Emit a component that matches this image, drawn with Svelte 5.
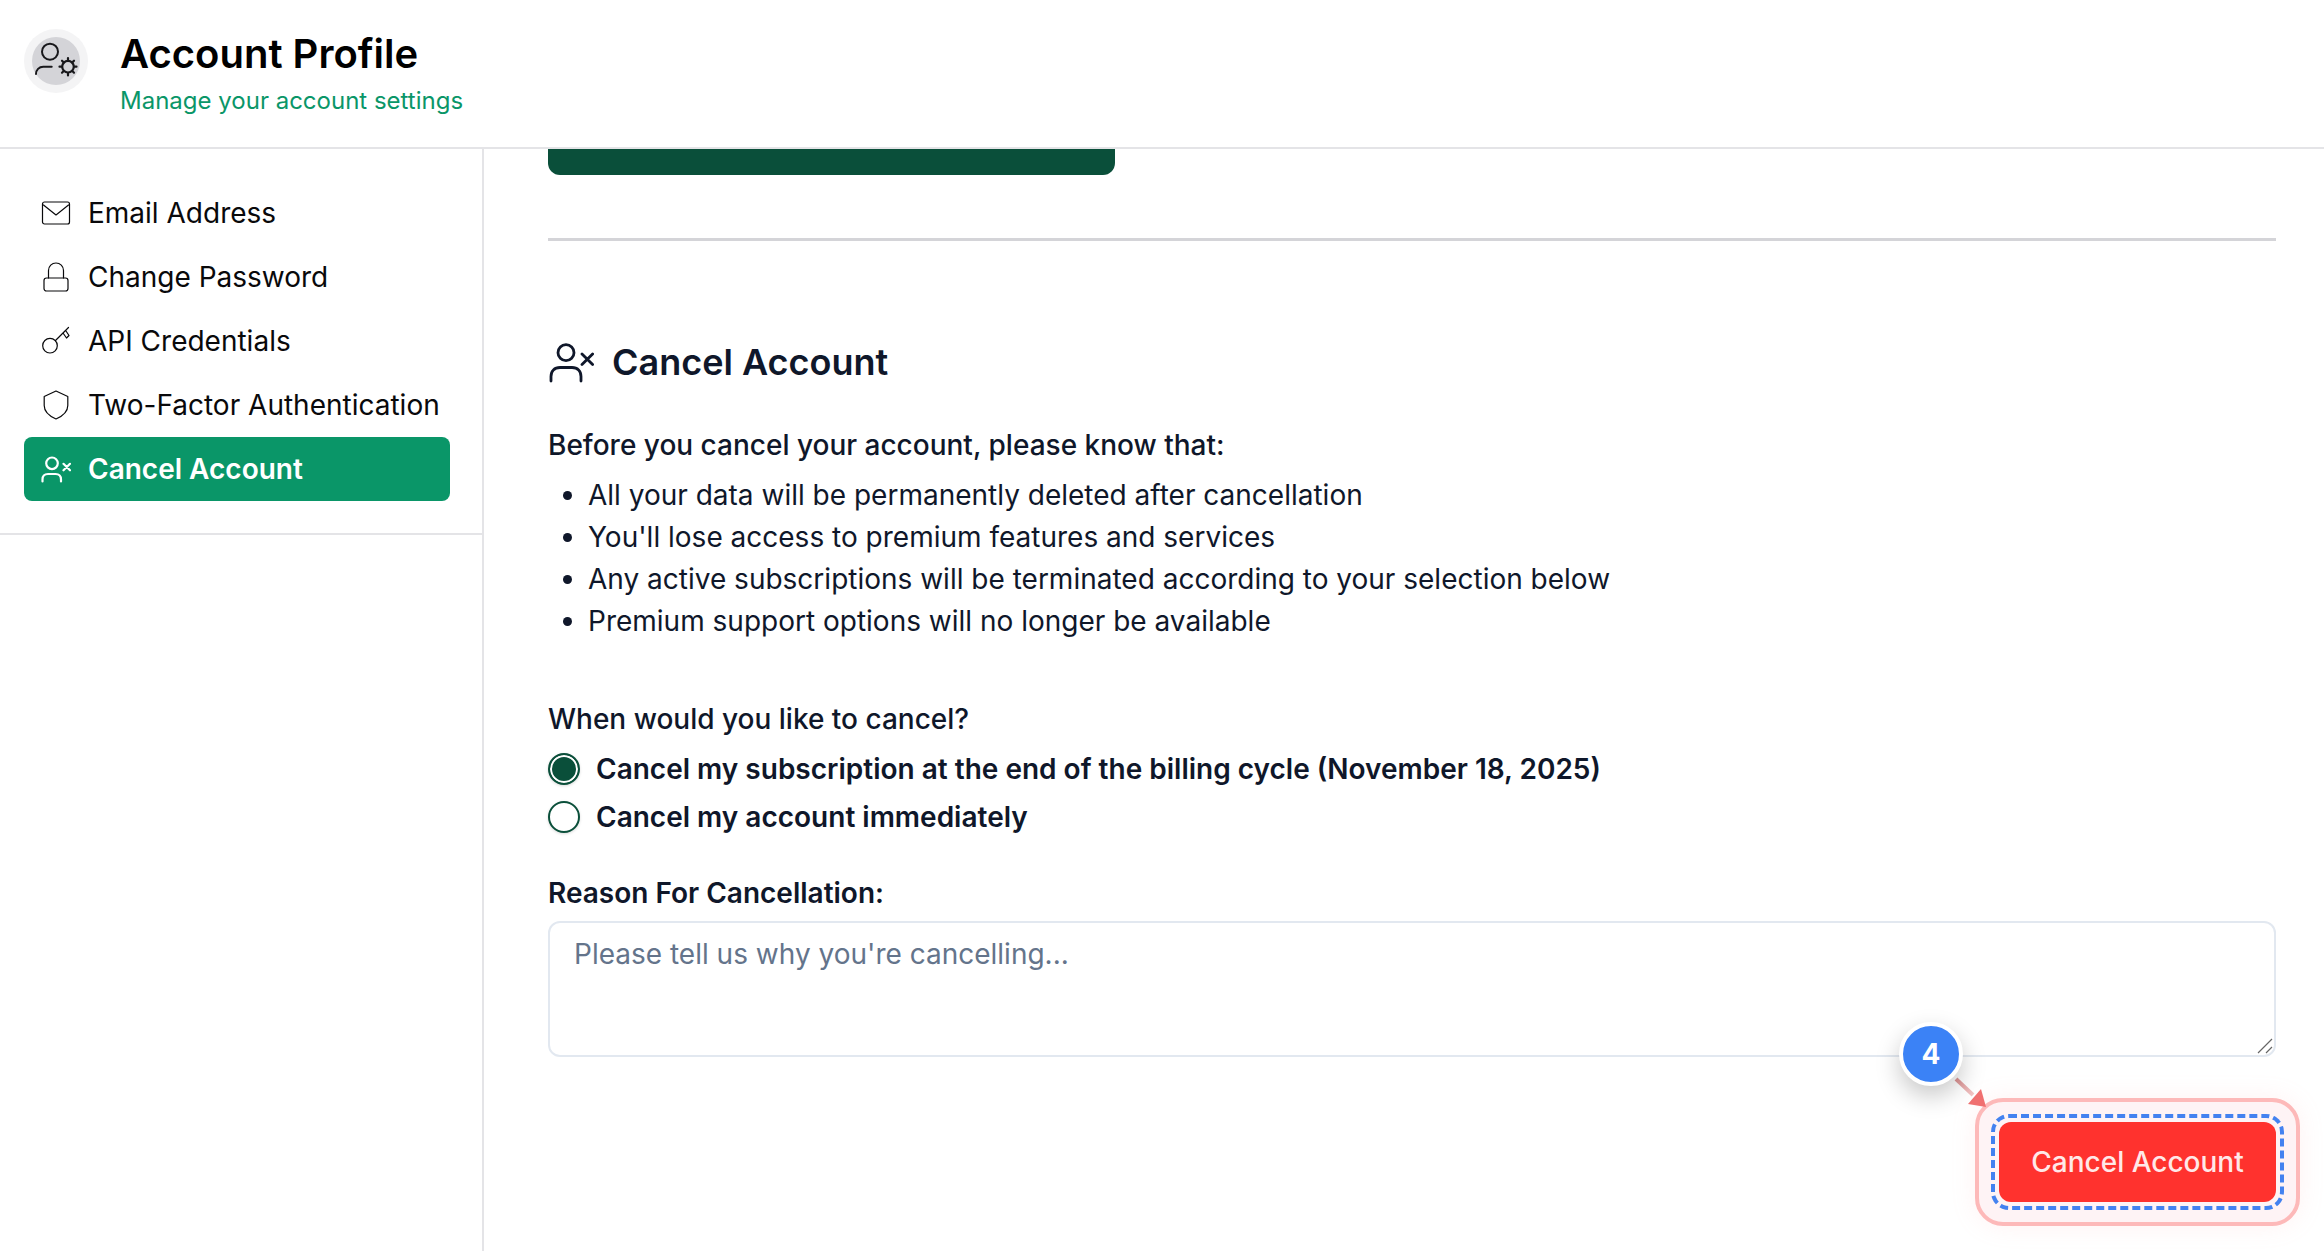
<script lang="ts">
	const navItems = [
		{ id: 'email', label: 'Email Address' },
		{ id: 'password', label: 'Change Password' },
		{ id: 'api', label: 'API Credentials' },
		{ id: 'twofa', label: 'Two-Factor Authentication' },
		{ id: 'cancel', label: 'Cancel Account' }
	];

	const notices = [
		'All your data will be permanently deleted after cancellation',
		"You'll lose access to premium features and services",
		'Any active subscriptions will be terminated according to your selection below',
		'Premium support options will no longer be available'
	];

	let when = $state('end');
</script>

<div class="page">
	<header class="topbar">
		<div class="avatar">
			<span class="avatar-inner">
				<svg width="48" height="48" viewBox="0 0 48 48" fill="none" stroke="#18181b" stroke-width="2" stroke-linecap="round">
					<circle cx="18" cy="14.700" r="8" />
					<path d="M4 37c0-4 3-7.300 7.300-7.300h8.400" />
					<circle cx="36" cy="29.700" r="5.800" stroke-width="2.200" />
					<path d="M36 21v2.500M36 36v2.500M27.500 29.700H30M42 29.700h2.500M30 23.700l1.700 1.700M40.300 34l1.700 1.700M30 35.700l1.700-1.700M40.300 25.400l1.700-1.700" stroke-width="2.200" />
				</svg>
			</span>
		</div>
		<div class="titles">
			<h1>Account Profile</h1>
			<p>Manage your account settings</p>
		</div>
	</header>

	<div class="body">
		<aside class="sidebar">
			<nav>
				{#each navItems as item}
					<a href="#{item.id}" class="nav-item" class:active={item.id === 'cancel'}>
						<svg width="30" height="30" viewBox="0 0 30 30" fill="none" stroke="currentColor" stroke-width="1.200" stroke-linecap="round" stroke-linejoin="round">
							{#if item.id === 'email'}
								<rect x="1.500" y="4" width="27" height="22" rx="2" />
								<path d="M2.500 7 15 17 27.500 7" />
							{:else if item.id === 'password'}
								<rect x="3" y="16" width="24" height="13" rx="2.500" />
								<path d="M7.500 16V8.500a7.500 7.500 0 0 1 15 0V16" />
							{:else if item.id === 'api'}
								<circle cx="9" cy="19.700" r="7.300" />
								<path d="M14.500 14.500 27.500 1.500M22 7l3.500 5 2.500-2.500-3-4.500" />
							{:else if item.id === 'twofa'}
								<path d="M15 1 26.800 6.500v9c0 6.500-5 10.500-11.800 13.500-6.800-3-11.800-7-11.800-13.500v-9z" />
							{:else}
								<g stroke-width="2.200">
									<circle cx="11" cy="9.300" r="5.800" />
									<path d="M1.500 27.500v-2c0-3.500 2-5.500 5.500-5.500h7.500c3.500 0 5.500 2 5.500 5.500v2" />
									<path d="m22.500 9.800 6.500 6.500m0-6.500-6.500 6.500" />
								</g>
							{/if}
						</svg>
						<span>{item.label}</span>
					</a>
				{/each}
			</nav>
		</aside>

		<main class="content">
			<div class="save-stub"></div>
			<hr />

			<h2>
				<svg width="46" height="46" viewBox="0 0 46 46" fill="none" stroke="#0f172a" stroke-width="2.800" stroke-linecap="round" stroke-linejoin="round">
					<circle cx="18" cy="13.700" r="8" />
					<path d="M3 42v-4.500c0-5.500 3.500-9 9-9h12c5.500 0 9 3.500 9 9V42" />
					<path d="m34 15 10.600 10.600m0-10.600L34 25.600" />
				</svg>
				Cancel Account
			</h2>

			<p class="lead">Before you cancel your account, please know that:</p>
			<ul>
				{#each notices as notice}
					<li>{notice}</li>
				{/each}
			</ul>

			<p class="question">When would you like to cancel?</p>
			<label class="option">
				<input type="radio" name="when" value="end" bind:group={when} />
				Cancel my subscription at the end of the billing cycle (November 18, 2025)
			</label>
			<label class="option">
				<input type="radio" name="when" value="now" bind:group={when} />
				Cancel my account immediately
			</label>

			<label class="reason" for="reason">Reason For Cancellation:</label>
			<div class="field">
				<textarea id="reason" placeholder="Please tell us why you're cancelling..."></textarea>
				<svg class="grip" width="16" height="16" viewBox="0 0 16 16" fill="none" stroke="#666" stroke-width="1.200">
					<path d="M1 15 15 1M9 15l6-6" />
				</svg>
			</div>

			<div class="actions">
				<div class="cta">
					<span class="highlight"></span>
					<span class="dashes"></span>
					<button type="button">Cancel Account</button>
					<svg class="arrow" width="60" height="60" viewBox="0 0 60 60" fill="none">
						<defs>
							<linearGradient id="shaft" x1="0" y1="0" x2="1" y2="1">
								<stop offset="0" stop-color="#dc9393" />
								<stop offset="1" stop-color="#f3c6c6" />
							</linearGradient>
						</defs>
						<path d="M4 4 21 20" stroke="url(#shaft)" stroke-width="4" />
						<path d="M16 29 29 14 34 32z" fill="#f07070" />
					</svg>
					<span class="badge">4</span>
				</div>
			</div>
		</main>
	</div>
</div>

<style>
	:global(body) {
		margin: 0;
		background: #fff;
		font-family: Inter, "Liberation Sans", sans-serif;
	}

	.page {
		height: 1251px;
		display: flex;
		flex-direction: column;
		overflow: hidden;
	}

	/* Top bar */
	.topbar {
		display: flex;
		gap: 32px;
		height: 118px;
		padding: 29px 24px 0;
		border-bottom: 2px solid #e4e4e7;
		flex: none;
	}

	.avatar {
		width: 64px;
		height: 64px;
		border-radius: 50%;
		background: #f4f4f5;
		display: flex;
		align-items: center;
		justify-content: center;
	}

	.avatar-inner {
		display: flex;
		width: 48px;
		height: 48px;
		border-radius: 50%;
		background: #d4d4d8;
	}

	.titles h1 {
		margin: 0;
		font-size: 40px;
		line-height: 50px;
		font-weight: 600;
		color: #000;
	}

	.titles p {
		margin: 7px 0 0;
		font-size: 24px;
		line-height: 30px;
		color: #0a9668;
	}

	.body {
		flex: 1;
		display: flex;
		min-height: 0;
	}

	/* Sidebar */
	.sidebar {
		width: 482px;
		flex: none;
		border-right: 2px solid #e4e4e7;
	}

	nav {
		padding: 32px 32px 32px 24px;
		border-bottom: 2px solid #e4e4e7;
	}

	.nav-item {
		display: flex;
		align-items: center;
		gap: 17px;
		height: 64px;
		padding-left: 17px;
		border-radius: 8px;
		font-size: 28px;
		color: #09090b;
		text-decoration: none;
	}

	.nav-item svg {
		flex: none;
	}

	.nav-item span {
		margin-top: -1px;
	}

	.nav-item.active {
		background: #0a9668;
		color: #fff;
		font-weight: 600;
	}

	/* Main column */
	.content {
		flex: 1;
		min-width: 0;
		padding: 0 48px 0 64px;
		color: #0f172a;
	}

	.save-stub {
		width: 567px;
		height: 26px;
		background: #0a4f3a;
		border-radius: 0 0 12px 12px;
	}

	hr {
		height: 3px;
		margin: 63px 0 0;
		border: 0;
		background: #d4d4d8;
	}

	h2 {
		display: flex;
		align-items: center;
		gap: 18px;
		margin: 96px 0 0;
		font-size: 36px;
		line-height: 50px;
		font-weight: 600;
	}

	h2 svg {
		flex: none;
	}

	.lead,
	.question {
		margin: 0;
		font-size: 28px;
		line-height: 42px;
		font-weight: 500;
	}

	.lead {
		margin-top: 37px;
	}

	ul {
		margin: 8px 0 0;
		padding: 0 0 0 40px;
		font-size: 28px;
		line-height: 42px;
	}

	.question {
		margin-top: 56px;
		margin-bottom: 5px;
	}

	.option {
		display: flex;
		align-items: center;
		gap: 16px;
		height: 48px;
		font-size: 28px;
		font-weight: 600;
	}

	.option input {
		appearance: none;
		flex: none;
		box-sizing: border-box;
		width: 32px;
		height: 32px;
		margin: 0;
		border: 2px solid #0a4f3a;
		border-radius: 50%;
		background: #fff;
		box-shadow: 0 1px 3px rgba(0, 0, 0, 0.15);
	}

	.option input:checked {
		background: #0a4f3a;
		box-shadow: inset 0 0 0 2px #fff, 0 1px 3px rgba(0, 0, 0, 0.15);
	}

	.reason {
		display: block;
		margin-top: 31px;
		font-size: 28px;
		line-height: 42px;
		font-weight: 600;
	}

	.field {
		position: relative;
		margin-top: 7px;
	}

	textarea {
		display: block;
		box-sizing: border-box;
		width: 100%;
		height: 136px;
		padding: 11px 24px;
		border: 2px solid #e2e8f0;
		border-radius: 12px;
		font: inherit;
		font-size: 28px;
		line-height: 40px;
		color: #0f172a;
		outline: none;
		resize: none;
	}

	textarea::placeholder {
		color: #64748b;
		opacity: 1;
	}

	.grip {
		position: absolute;
		right: 3px;
		bottom: 3px;
		pointer-events: none;
	}

	.actions {
		display: flex;
		justify-content: flex-end;
		margin-top: 65px;
	}

	/* Tour annotation around the button */
	.cta {
		position: relative;
	}

	.cta button {
		position: relative;
		display: block;
		width: 277px;
		height: 80px;
		border: 0;
		border-radius: 12px;
		background: #ff322e;
		color: #ffe8e8;
		font: inherit;
		font-size: 28px;
		font-weight: 500;
	}

	.highlight {
		position: absolute;
		inset: -24px;
		border: 4px solid #fdb9b9;
		border-radius: 28px;
		background: #fef3f5;
		box-shadow: 0 0 24px rgba(252, 165, 165, 0.15);
	}

	.dashes {
		position: absolute;
		inset: -8px;
		border: 4px dashed #4382f0;
		border-radius: 18px;
	}

	.arrow {
		position: absolute;
		left: -47px;
		top: -47px;
	}

	.badge {
		position: absolute;
		left: -100px;
		top: -100px;
		box-sizing: border-box;
		width: 64px;
		height: 64px;
		display: flex;
		align-items: center;
		justify-content: center;
		border: 4px solid #fff;
		border-radius: 50%;
		background: #3b82f6;
		color: #fff;
		font-size: 28px;
		font-weight: 700;
		box-shadow: 0 10px 24px rgba(0, 0, 0, 0.22);
	}
</style>
